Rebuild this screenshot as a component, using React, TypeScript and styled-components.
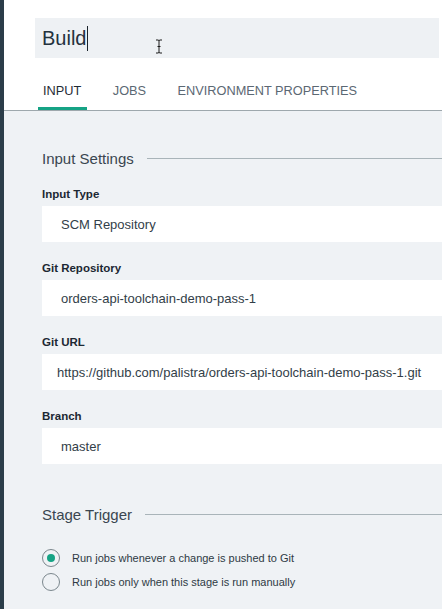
import React from "react";
import styled, { createGlobalStyle } from "styled-components";

const Global = createGlobalStyle`
  html, body { margin: 0; padding: 0; background: #eff2f5; }
  body { font-family: "Liberation Sans", Arial, sans-serif; }
  * { box-sizing: border-box; }
`;

const Page = styled.div`
  display: flex;
  min-height: 609px;
  width: 442px;
  overflow: hidden;
`;

const Stripe = styled.div`
  width: 4px;
  flex: none;
  background: #2b3d49;
`;

const Main = styled.div`
  flex: 1;
  display: flex;
  flex-direction: column;
  min-width: 0;
`;

const Header = styled.div`
  background: #ffffff;
  padding-top: 18px;
`;

const TitleBox = styled.div`
  position: relative;
  margin: 0 3px 0 31px;
  height: 40px;
  background: #eef1f4;
  display: flex;
  align-items: center;
  padding-left: 7px;
  font-size: 20px;
  color: #24323e;
`;

const Caret = styled.span`
  display: inline-block;
  width: 1px;
  height: 25px;
  background: #1a232b;
  margin-left: 1px;
`;

const Pointer = styled.svg`
  position: absolute;
  left: 120px;
  top: 21px;
`;

const Tabs = styled.div`
  display: flex;
  gap: 21px;
  padding-left: 34px;
  border-bottom: 1px solid #9ea8ad;
`;

const Tab = styled.div<{ $active?: boolean }>`
  padding: 25px 5.5px 8px 5px;
  font-size: 12.75px;
  line-height: 16px;
  color: ${(p) => (p.$active ? "#1f2b36" : "#5b6873")};
  border-bottom: 3px solid ${(p) => (p.$active ? "#16a385" : "transparent")};
  white-space: nowrap;
`;

const Body = styled.div`
  background: #eff2f5;
  padding: 37px 0 30px 38px;
  display: flex;
  flex-direction: column;
`;

const SectionHeading = styled.div<{ $top?: number }>`
  display: flex;
  align-items: center;
  gap: 13px;
  height: 20px;
  margin-top: ${(p) => p.$top ?? 0}px;
  font-size: 15px;
  color: #3a4650;
  white-space: nowrap;
  &::after {
    content: "";
    flex: 1;
    height: 1px;
    background: #a9b4b9;
  }
`;

const Label = styled.div`
  margin-top: 18px;
  height: 16px;
  line-height: 16px;
  font-size: 11.5px;
  font-weight: bold;
  color: #1c2833;
`;

const Field = styled.div<{ $pad?: number }>`
  margin-top: 4px;
  height: 36px;
  background: #ffffff;
  display: flex;
  align-items: center;
  padding-left: ${(p) => p.$pad ?? 19}px;
  font-size: 13px;
  color: #323e48;
  white-space: nowrap;
  overflow: hidden;
`;

const RadioGroup = styled.div`
  margin-top: 22px;
  display: flex;
  flex-direction: column;
`;

const RadioRow = styled.label`
  display: flex;
  align-items: center;
  gap: 12px;
  height: 24px;
  font-size: 11px;
  color: #2e3a44;
`;

const RadioCircle = styled.span<{ $checked?: boolean }>`
  width: 18px;
  height: 18px;
  border-radius: 50%;
  border: 1.5px solid #7b878d;
  display: flex;
  align-items: center;
  justify-content: center;
  flex: none;
  &::after {
    content: "";
    width: 8px;
    height: 8px;
    border-radius: 50%;
    background: ${(p) => (p.$checked ? "#16a385" : "transparent")};
  }
`;

const fields = [
  { label: "Input Type", value: "SCM Repository" },
  { label: "Git Repository", value: "orders-api-toolchain-demo-pass-1" },
  { label: "Git URL", value: "https://github.com/palistra/orders-api-toolchain-demo-pass-1.git", pad: 15 },
  { label: "Branch", value: "master" },
];

export default function App() {
  return (
    <>
      <Global />
      <Page>
        <Stripe />
        <Main>
          <Header>
            <TitleBox>
              Build
              <Caret />
              <Pointer width="8" height="15" viewBox="0 0 8 15">
                <path d="M1 1 H3 Q4 1 4 2 V13 Q4 14 3 14 H1 M7 1 H5 Q4 1 4 2 M4 13 Q4 14 5 14 H7 M2.5 7.5 H5.5" fill="none" stroke="#1a1a1a" strokeWidth="1" />
              </Pointer>
            </TitleBox>
            <Tabs>
              <Tab $active>INPUT</Tab>
              <Tab>JOBS</Tab>
              <Tab>ENVIRONMENT PROPERTIES</Tab>
            </Tabs>
          </Header>
          <Body>
            <SectionHeading>Input Settings</SectionHeading>
            {fields.map((f) => (
              <React.Fragment key={f.label}>
                <Label>{f.label}</Label>
                <Field $pad={f.pad}>{f.value}</Field>
              </React.Fragment>
            ))}
            <SectionHeading $top={40}>Stage Trigger</SectionHeading>
            <RadioGroup>
              <RadioRow>
                <RadioCircle $checked />
                Run jobs whenever a change is pushed to Git
              </RadioRow>
              <RadioRow>
                <RadioCircle />
                Run jobs only when this stage is run manually
              </RadioRow>
            </RadioGroup>
          </Body>
        </Main>
      </Page>
    </>
  );
}
